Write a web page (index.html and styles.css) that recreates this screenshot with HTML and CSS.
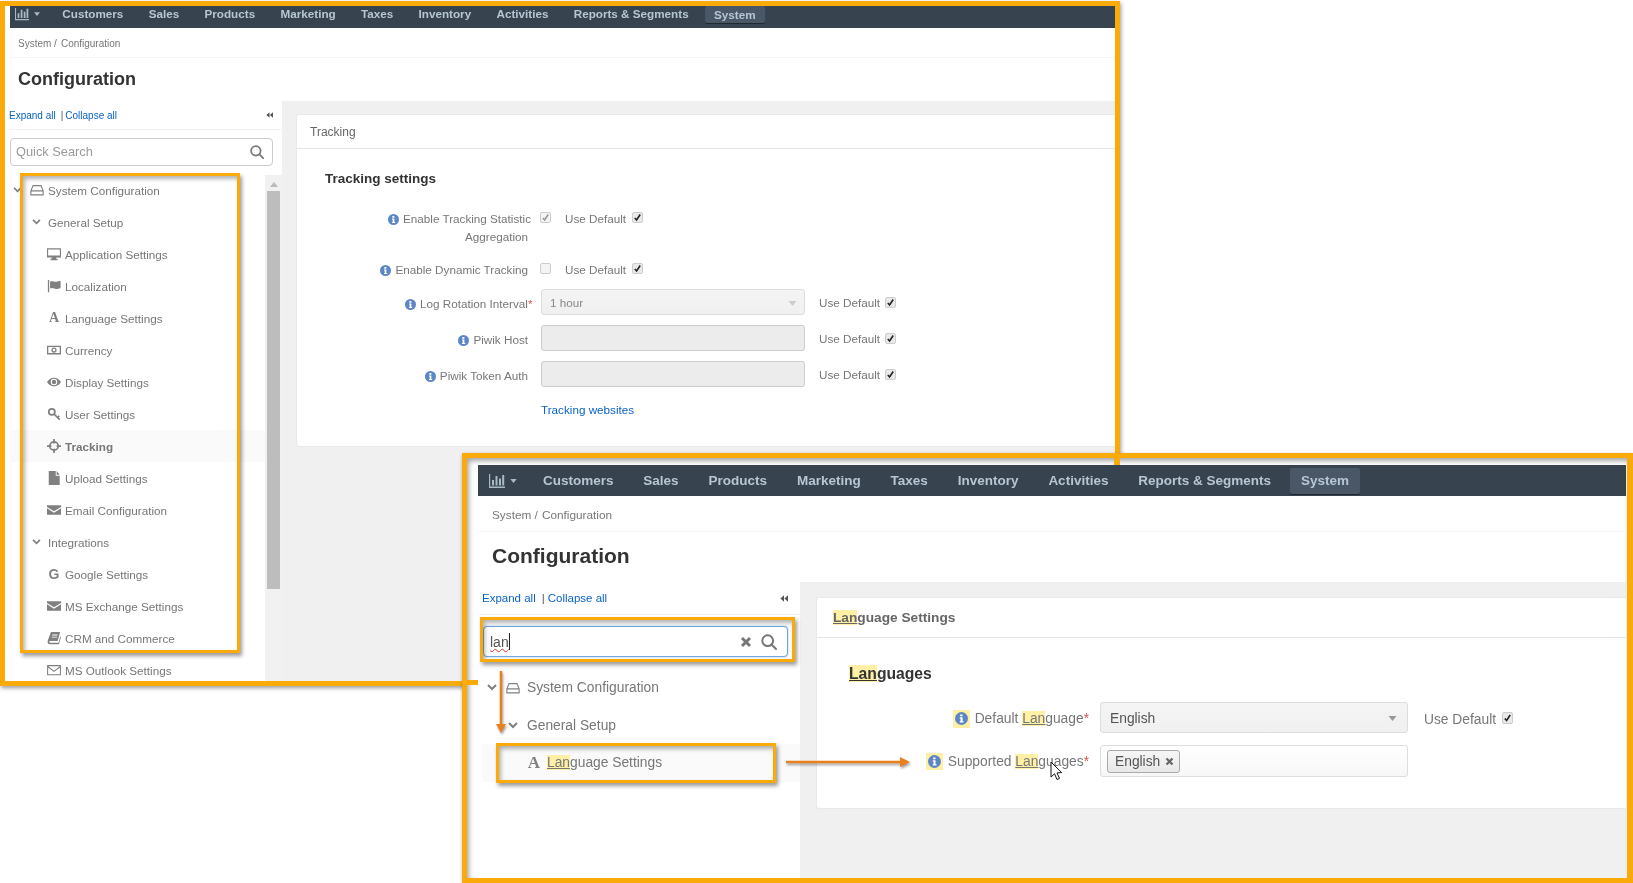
FILE: index.html
```html
<!DOCTYPE html>
<html>
    <head>
        <meta charset="utf-8" />
        <title>Configuration search</title>
        <link rel="stylesheet" href="styles.css">
    </head>
    <body>
        <svg class="defs" width="0" height="0">
            <symbol id="i-chart" viewBox="0 0 16 16"><path d="M0 1h1.2v12.6H16V15H0z M3 7h2v5.5H3z M6.5 3h2v9.5h-2z M10 5.5h2v7h-2z M13.2 2h2v10.500h-2z"/></symbol>
            <symbol id="i-caret" viewBox="0 0 8 5"><path d="M0 0h8L4 5z"/></symbol>
            <symbol id="i-hdd" viewBox="0 0 16 16"><path d="M3.500 3h9l2.500 6v4.500H1V9z M1 9h14" fill="none" stroke="currentColor" stroke-width="1.300"/></symbol>
            <symbol id="i-monitor" viewBox="0 0 16 16"><path fill-rule="evenodd" d="M0 1.500h16v10.500h-5.500v1.500H12V15H4v-1.500h1.500V12H0z M1.300 2.800v7h13.400v-7z"/></symbol>
            <symbol id="i-flag" viewBox="0 0 16 16"><path d="M1 1h1.500v14H1z M3.500 3c3-1.500 5 .8 7.500 0s3.500-.8 4.500-.8v8.300c-1.500 0-3 .9-5 .9s-4-2.200-7-.5z"/></symbol>
            <symbol id="i-money" viewBox="0 0 16 16"><path fill-rule="evenodd" d="M0 3h16v10H0z M1.500 4.500v7h13v-7z M8 5a3 3 0 100 6 3 3 0 000-6z M8 6.500a1.500 1.500 0 110 3 1.500 1.500 0 010-3z"/></symbol>
            <symbol id="i-eye" viewBox="0 0 16 16"><path fill-rule="evenodd" d="M0 8c2-3.500 5-5 8-5s6 1.500 8 5c-2 3.500-5 5-8 5s-6-1.500-8-5z M8 4.300a3.700 3.700 0 100 7.400 3.700 3.700 0 000-7.400z M8 5.500a2.500 2.500 0 110 5 2.500 2.500 0 010-5z"/></symbol>
            <symbol id="i-key" viewBox="0 0 16 16"><g fill="none" stroke="currentColor" stroke-width="2"><circle cx="5.500" cy="5.500" r="3.500"/><path d="M8 8l6.500 6.500 M12 12l2-2"/></g></symbol>
            <symbol id="i-target" viewBox="0 0 16 16"><g fill="none" stroke="currentColor"><circle cx="8" cy="8" r="4.800" stroke-width="2"/><path d="M8 0v5 M8 11v5 M0 8h5 M11 8h5" stroke-width="2"/></g></symbol>
            <symbol id="i-file" viewBox="0 0 16 16"><path d="M2 0h8v5.500h4.500V16H2z M11 0l3.500 4.300H11z"/></symbol>
            <symbol id="i-mail" viewBox="0 0 16 16"><path d="M0 2.500h16v2L8 9.500 0 4.500z M0 6l8 5 8-5v7.500H0z"/></symbol>
            <symbol id="i-mail-o" viewBox="0 0 16 16"><path d="M.7 3h14.600v10.500H.7z M.7 4l7.300 5.500L15.300 4" fill="none" stroke="currentColor" stroke-width="1.200"/></symbol>
            <symbol id="i-book" viewBox="0 0 16 16"><path fill-rule="evenodd" d="M4.500 1H15l-2.800 10.500H3.500c-1 0-1 2 0 2h9.800l2-7.500.7 1-2.300 8H3c-2.500 0-2.500-3-2-4.500z M6 4v1h6V4z M5.500 6.500v1h6v-1z"/></symbol>
            <symbol id="i-chevron" viewBox="0 0 10 7"><path d="M1 1l4 4 4-4" fill="none" stroke="currentColor" stroke-width="2"/></symbol>
            <symbol id="i-search" viewBox="0 0 16 16"><g fill="none" stroke="currentColor" stroke-width="2"><circle cx="6.700" cy="6.700" r="5.400"/><path d="M10.800 10.800l4.200 4.200" stroke-linecap="round"/></g></symbol>
            <symbol id="i-double" viewBox="0 0 10 8"><path d="M5 0v8L.5 4z M10 0v8L5.500 4z"/></symbol>
            <symbol id="i-times" viewBox="0 0 12 12"><path d="M2 2l8 8 M10 2l-8 8" fill="none" stroke="currentColor" stroke-width="3"/></symbol>
            <symbol id="i-check" viewBox="0 0 10 10"><path d="M2 5.500l2 2.200 4-6" fill="none" stroke="currentColor" stroke-width="1.800"/></symbol>
            <symbol id="i-info" viewBox="0 0 16 16"><circle cx="8" cy="8" r="8" fill="#5d86c6"/><path d="M6.300 3h3v2.300h-3z M5.800 6.500h3.500v5h1.200V13H5.800v-1.500h1v-3.500h-1z" fill="#fff"/></symbol>
        </svg>

        <div class="canvas">
            <section class="shot shot-a">
                <nav class="topbar">
                    <div class="brand"><svg class="chart"><use href="#i-chart"/></svg><svg class="caret"><use href="#i-caret"/></svg></div>
                    <a class="nav-item">Customers</a>
                    <a class="nav-item">Sales</a>
                    <a class="nav-item">Products</a>
                    <a class="nav-item">Marketing</a>
                    <a class="nav-item">Taxes</a>
                    <a class="nav-item">Inventory</a>
                    <a class="nav-item">Activities</a>
                    <a class="nav-item">Reports &amp; Segments</a>
                    <a class="nav-item active">System</a>
                </nav>
                <div class="crumbs"><span class="crumb">System /</span>Configuration</div>
                <h1 class="page-title">Configuration</h1>
                <div class="page-body">
                    <aside class="sidebar">
                        <div class="side-top">
                            <span class="links"><a>Expand all</a><i>|</i><a>Collapse all</a></span>
                            <svg class="double"><use href="#i-double"/></svg>
                        </div>
                        <div class="search-wrap">
                            <div class="search">
                                <span class="placeholder">Quick Search</span>
                                <svg class="search-ico"><use href="#i-search"/></svg>
                            </div>
                        </div>
                        <div class="tree-wrap">
                            <ul class="tree">
                                <li class="row l1"><svg class="chev"><use href="#i-chevron"/></svg><svg class="ico"><use href="#i-hdd"/></svg><span class="txt">System Configuration</span></li>
                                <li class="row l2"><svg class="chev"><use href="#i-chevron"/></svg><span class="txt">General Setup</span></li>
                                <li class="row l3"><svg class="ico"><use href="#i-monitor"/></svg><span class="txt">Application Settings</span></li>
                                <li class="row l3"><svg class="ico"><use href="#i-flag"/></svg><span class="txt">Localization</span></li>
                                <li class="row l3"><span class="ico glyph-a">A</span><span class="txt">Language Settings</span></li>
                                <li class="row l3"><svg class="ico"><use href="#i-money"/></svg><span class="txt">Currency</span></li>
                                <li class="row l3"><svg class="ico"><use href="#i-eye"/></svg><span class="txt">Display Settings</span></li>
                                <li class="row l3"><svg class="ico"><use href="#i-key"/></svg><span class="txt">User Settings</span></li>
                                <li class="row l3 current"><svg class="ico"><use href="#i-target"/></svg><span class="txt">Tracking</span></li>
                                <li class="row l3"><svg class="ico"><use href="#i-file"/></svg><span class="txt">Upload Settings</span></li>
                                <li class="row l3"><svg class="ico"><use href="#i-mail"/></svg><span class="txt">Email Configuration</span></li>
                                <li class="row l2"><svg class="chev"><use href="#i-chevron"/></svg><span class="txt">Integrations</span></li>
                                <li class="row l3"><span class="ico glyph-g">G</span><span class="txt">Google Settings</span></li>
                                <li class="row l3"><svg class="ico"><use href="#i-mail"/></svg><span class="txt">MS Exchange Settings</span></li>
                                <li class="row l3"><svg class="ico"><use href="#i-book"/></svg><span class="txt">CRM and Commerce</span></li>
                                <li class="row l3"><svg class="ico"><use href="#i-mail-o"/></svg><span class="txt">MS Outlook Settings</span></li>
                            </ul>
                            <div class="scrollbar">
                                <span class="scroll-up"></span>
                                <span class="scroll-thumb"></span>
                            </div>
                        </div>
                    </aside>
                    <main class="content">
                        <div class="panel">
                            <div class="panel-head">Tracking</div>
                            <div class="panel-body">
                                <h2 class="section">Tracking settings</h2>
                                <div class="frow">
                                    <label class="flabel"><span class="nudge"><svg class="info"><use href="#i-info"/></svg>Enable Tracking Statistic</span><br>Aggregation</label>
                                    <span class="box off"><svg><use href="#i-check"/></svg></span>
                                    <span class="use">Use Default</span>
                                    <span class="box"><svg><use href="#i-check"/></svg></span>
                                </div>
                                <div class="frow second">
                                    <label class="flabel"><svg class="info"><use href="#i-info"/></svg>Enable Dynamic Tracking</label>
                                    <span class="box off"></span>
                                    <span class="use">Use Default</span>
                                    <span class="box"><svg><use href="#i-check"/></svg></span>
                                </div>
                                <div class="frow wide">
                                    <label class="flabel"><svg class="info"><use href="#i-info"/></svg>Log Rotation Interval<b class="star">*</b></label>
                                    <div class="select">1 hour<svg class="caret"><use href="#i-caret"/></svg></div>
                                    <span class="use">Use Default</span>
                                    <span class="box"><svg><use href="#i-check"/></svg></span>
                                </div>
                                <div class="frow wide">
                                    <label class="flabel"><svg class="info"><use href="#i-info"/></svg>Piwik Host</label>
                                    <div class="input"></div>
                                    <span class="use">Use Default</span>
                                    <span class="box"><svg><use href="#i-check"/></svg></span>
                                </div>
                                <div class="frow wide">
                                    <label class="flabel"><svg class="info"><use href="#i-info"/></svg>Piwik Token Auth</label>
                                    <div class="input"></div>
                                    <span class="use">Use Default</span>
                                    <span class="box"><svg><use href="#i-check"/></svg></span>
                                </div>
                                <a class="track-link">Tracking websites</a>
                            </div>
                        </div>
                    </main>
                </div>
            </section>

            <section class="shot shot-b">
                <nav class="topbar">
                    <div class="brand"><svg class="chart"><use href="#i-chart"/></svg><svg class="caret"><use href="#i-caret"/></svg></div>
                    <a class="nav-item">Customers</a>
                    <a class="nav-item">Sales</a>
                    <a class="nav-item">Products</a>
                    <a class="nav-item">Marketing</a>
                    <a class="nav-item">Taxes</a>
                    <a class="nav-item">Inventory</a>
                    <a class="nav-item">Activities</a>
                    <a class="nav-item">Reports &amp; Segments</a>
                    <a class="nav-item active">System</a>
                </nav>
                <div class="crumbs"><span class="crumb">System /</span>Configuration</div>
                <h1 class="page-title">Configuration</h1>
                <div class="page-body">
                    <aside class="sidebar">
                        <div class="side-top">
                            <span class="links"><a>Expand all</a><i>|</i><a>Collapse all</a></span>
                            <svg class="double"><use href="#i-double"/></svg>
                        </div>
                        <div class="search-wrap">
                            <div class="search focus">
                                <span class="typed">lan</span><span class="text-caret"></span>
                                <svg class="clear-ico"><use href="#i-times"/></svg>
                                <svg class="search-ico"><use href="#i-search"/></svg>
                            </div>
                        </div>
                        <ul class="tree">
                            <li class="row l1"><svg class="chev"><use href="#i-chevron"/></svg><svg class="ico"><use href="#i-hdd"/></svg><span class="txt">System Configuration</span></li>
                            <li class="row l2"><svg class="chev"><use href="#i-chevron"/></svg><span class="txt">General Setup</span></li>
                            <li class="row l3 current"><span class="ico glyph-a">A</span><span class="txt"><mark>Lan</mark>guage Settings</span></li>
                        </ul>
                    </aside>
                    <main class="content">
                        <div class="panel">
                            <div class="panel-head"><mark>Lan</mark>guage Settings</div>
                            <div class="panel-body">
                                <h2 class="section"><mark>Lan</mark>guages</h2>
                                <div class="frow wide first">
                                    <label class="flabel"><mark class="info-mark"><svg class="info"><use href="#i-info"/></svg></mark>Default <mark>Lan</mark>guage<b class="star">*</b></label>
                                    <div class="select">English<svg class="caret"><use href="#i-caret"/></svg></div>
                                    <span class="use">Use Default</span>
                                    <span class="box"><svg><use href="#i-check"/></svg></span>
                                </div>
                                <div class="frow wide">
                                    <label class="flabel"><mark class="info-mark"><svg class="info"><use href="#i-info"/></svg></mark>Supported <mark>Lan</mark>guages<b class="star">*</b></label>
                                    <div class="multi"><span class="tag">English<svg><use href="#i-times"/></svg></span></div>
                                </div>
                            </div>
                        </div>
                    </main>
                </div>
            </section>

            <!-- callouts drawn over the two screenshots -->
            <div class="stub stub-h"></div>
            <div class="stub stub-v"></div>
            <div class="mark mark-tree"></div>
            <div class="mark mark-search"></div>
            <div class="mark mark-row"></div>
            <svg class="arrow arrow-down" width="16" height="66"><path d="M8 1v56" stroke="#e8801f" stroke-width="2.500"/><path d="M3 54h10l-5 9z" fill="#e8801f"/></svg>
            <svg class="arrow arrow-right" width="128" height="14"><path d="M1 7h116" stroke="#e8801f" stroke-width="2.500"/><path d="M115 2l10 5-10 5z" fill="#e8801f"/></svg>
            <svg class="pointer" width="14" height="20" viewBox="0 0 14 20"><path d="M1 1v15l3.500-3.200 2.500 5.700 2.500-1.100-2.500-5.500 4.700-.3z" fill="#fff" stroke="#111" stroke-width="1"/></svg>
        </div>
    </body>
</html>
```
FILE: styles.css
```css
html, body {
    margin: 0;
    padding: 0;
    background: #fff;
}
ul, h1, h2 {
    margin: 0;
    padding: 0;
}
ul {
    list-style: none;
}
.defs {
    position: absolute;
}
.canvas {
    position: relative;
    width: 1633px;
    height: 883px;
    overflow: hidden;
    font-family: "Liberation Sans", Arial, sans-serif;
    color: #777;
}

/* the two pasted screenshots */
.shot {
    position: absolute;
    box-sizing: border-box;
    display: flex;
    flex-direction: column;
    overflow: hidden;
    background: #fff;
    border: 5px solid #faab0a;
    filter: drop-shadow(1px 2px 2px rgba(0, 0, 0, .4));
}
.shot-a {
    left: 0;
    top: 1px;
    width: 1120px;
    height: 685px;
    padding-left: 5px;
}
.shot-b {
    left: 462px;
    top: 453px;
    width: 1171px;
    height: 430px;
    padding: 7px 1px 0 11px;
    border-right-width: 6px;
    box-shadow: inset 2px 3px 5px rgba(0, 0, 0, .35);
}

.topbar {
    display: flex;
    align-items: center;
    flex: none;
    box-sizing: border-box;
    background: #37434f;
    color: #b6c6d2;
    font-weight: bold;
}
.brand {
    display: flex;
    align-items: center;
    flex: none;
    color: #a9bac6;
}
.brand svg, .select svg {
    fill: currentColor;
}
.nav-item {
    border-radius: 2px;
}
.nav-item.active {
    background: #4a5766;
    box-shadow: 0 1px 0 #20272e;
}
.crumbs {
    flex: none;
    display: flex;
    align-items: center;
    box-sizing: border-box;
    border-bottom: 1px solid #f5f5f5;
    color: #777;
}
.page-title {
    flex: none;
    color: #333;
    font-weight: bold;
}
.page-body {
    flex: 1;
    display: flex;
    min-height: 0;
    background: #f0f0f0;
}
.sidebar {
    flex: none;
    display: flex;
    flex-direction: column;
    min-height: 0;
    background: #fff;
}
.side-top {
    flex: none;
    display: flex;
    align-items: center;
    justify-content: space-between;
    box-sizing: border-box;
    border-bottom: 1px solid #f0f0f0;
}
.links {
    color: #0a62c4;
}
.links i {
    font-style: normal;
    color: #555;
}
.double {
    fill: #555;
}
.search-wrap {
    flex: none;
    box-sizing: border-box;
}
.search {
    display: flex;
    align-items: center;
    box-sizing: border-box;
    border: 1px solid #ccc;
    border-radius: 4px;
    background: #fff;
}
.placeholder {
    flex: 1;
    color: #999;
}
.search-ico, .clear-ico {
    flex: none;
    color: #777;
}
.tree-wrap {
    flex: 1;
    display: flex;
    min-height: 0;
}
.tree {
    overflow: hidden;
}
.row {
    display: flex;
    align-items: center;
    white-space: nowrap;
    color: #777;
}
.row.current {
    background: #fafafa;
}
.chev, .ico {
    flex: none;
    color: #808080;
    fill: currentColor;
}
.glyph-a {
    font-family: "Liberation Serif", serif;
    font-weight: bold;
    text-align: center;
}
.glyph-g {
    font-weight: bold;
    text-align: center;
}
mark {
    background: #fff0a6;
    color: inherit;
    text-decoration: underline;
}
.info-mark {
    display: inline-block;
    text-decoration: none;
    line-height: 1;
}

.panel {
    box-sizing: border-box;
    background: #fff;
    border-radius: 3px 0 0 3px;
    border: 1px solid #e9e9e9;
    border-right: 0;
}
.panel-head {
    display: flex;
    align-items: center;
    box-sizing: border-box;
    border-bottom: 1px solid #e5e5e5;
    color: #666;
}
.section {
    color: #333;
    font-weight: bold;
}
.frow {
    display: flex;
    align-items: flex-start;
}
.frow.wide {
    align-items: center;
}
.flabel {
    flex: none;
    text-align: right;
    color: #777;
}
.info {
    vertical-align: -2px;
}
.star {
    color: #d9534f;
    font-weight: normal;
}
.box {
    flex: none;
    display: flex;
    align-items: center;
    justify-content: center;
    box-sizing: border-box;
    border: 1px solid #ccc;
    border-radius: 2px;
    background: #e9e9e9;
    color: #222;
}
.box.off {
    background: #f4f4f4;
    color: #999;
}
.box svg {
    width: 100%;
    height: 100%;
}
.use {
    flex: none;
    color: #777;
}
.select, .input, .multi {
    flex: none;
    box-sizing: border-box;
    display: flex;
    align-items: center;
    border: 1px solid #ddd;
    border-radius: 3px;
}
.select {
    justify-content: space-between;
    background: linear-gradient(#f4f4f4, #f0f0f0);
    color: #888;
}
.input {
    background: #ececec;
    border-color: #ccc;
}
.multi {
    background: linear-gradient(#fff, #f7f7f7);
}
.tag {
    display: flex;
    align-items: center;
    box-sizing: border-box;
    border: 1px solid #aaa;
    border-radius: 3px;
    background: linear-gradient(#f6f6f6, #e8e8e8);
    color: #555;
}

/* sizes of the small screenshot */
.shot-a .topbar {
    height: 22px;
    padding: 0 0 7px 5px;
    gap: 7.300px;
    font-size: 11.700px;
}
.shot-a .brand {
    width: 31px;
}
.shot-a .chart {
    width: 14px;
    height: 14px;
}
.shot-a .brand .caret {
    width: 6px;
    height: 4px;
    margin-left: 5px;
}
.shot-a .nav-item {
    padding: 1px 9px;
}
.shot-a .nav-item.active {
    padding: 2px 9px;
    margin-top: 1px;
}
.shot-a .crumbs {
    height: 30px;
    padding: 2px 0 0 8px;
    font-size: 10px;
}
.shot-a .crumb {
    margin-right: 4px;
}
.shot-a .page-title {
    height: 43px;
    line-height: 42px;
    padding-left: 8px;
    font-size: 18px;
}
.shot-a .sidebar {
    width: 272px;
}
.shot-a .side-top {
    height: 29px;
    padding-right: 9px;
    font-size: 10px;
}
.shot-a .links {
    margin-left: -1px;
}
.shot-a .links i {
    margin: 0 2px 0 5px;
}
.shot-a .double {
    width: 7px;
    height: 6px;
}
.shot-a .search-wrap {
    height: 45px;
    padding-top: 8px;
}
.shot-a .search {
    width: 263px;
    height: 28px;
    padding: 0 8px 2px 5px;
    font-size: 12.800px;
}
.shot-a .search-ico {
    width: 14px;
    height: 14px;
    margin-top: 2px;
}
.shot-a .tree {
    width: 255px;
    margin-top: -1px;
    font-size: 11.700px;
}
.shot-a .row {
    height: 32px;
}
.shot-a .chev {
    width: 9px;
    height: 6px;
}
.shot-a .ico {
    width: 14px;
    height: 14px;
    line-height: 14px;
}
.shot-a .glyph-a, .shot-a .glyph-g {
    font-size: 14px;
}
.shot-a .l1 {
    padding-left: 3px;
}
.shot-a .l1 .ico {
    margin-left: 8px;
}
.shot-a .l1 .txt {
    margin-left: 4px;
}
.shot-a .l2 {
    padding-left: 22px;
}
.shot-a .l2 .txt {
    margin-left: 7px;
}
.shot-a .l3 {
    padding-left: 37px;
}
.shot-a .l3 .txt {
    margin-left: 4px;
}
.shot-a .current .txt {
    font-weight: bold;
}
.scrollbar {
    width: 17px;
    flex: none;
    display: flex;
    flex-direction: column;
    align-items: center;
    background: #f1f1f1;
}
.scroll-up {
    margin: 7px 0 4px;
    border: 4px solid transparent;
    border-top: 0;
    border-bottom: 5px solid #bbb;
}
.scroll-thumb {
    width: 13px;
    height: 398px;
    background: #bdbdbd;
}
.shot-a .content {
    flex: 1;
    padding: 13px 0 0 14px;
}
.shot-a .panel {
    height: 333px;
}
.shot-a .panel-head {
    height: 34px;
    padding-left: 13px;
    font-size: 12px;
}
.shot-a .panel-body {
    padding-top: 21px;
    font-size: 11.700px;
    line-height: 18px;
}
.shot-a .section {
    margin: 0 0 22px 28px;
    font-size: 13.500px;
    line-height: 18px;
}
.shot-a .flabel {
    width: 231px;
}
.shot-a .wide .flabel {
    padding-top: 3px;
}
.shot-a .nudge {
    margin-right: -2px;
    position: relative;
    left: 1px;
}
.shot-a .info {
    width: 11px;
    height: 11px;
    margin-right: 4px;
}
.shot-a .star {
    margin-right: -4.500px;
}
.shot-a .box {
    width: 11px;
    height: 11px;
    margin-top: 2px;
}
.shot-a .frow > .box:nth-of-type(1) {
    margin-left: 12px;
}
.shot-a .use {
    margin-left: 14px;
    width: 67px;
}
.shot-a .second {
    margin-top: 15px;
}
.shot-a .wide {
    margin-top: 10px;
}
.shot-a .wide .use {
    padding-top: 1px;
}
.shot-a .wide .box {
    margin: 0 0 0 -1px;
}
.shot-a .select, .shot-a .input {
    width: 264px;
    height: 26px;
    margin-left: 13px;
    padding: 2px 7px 0 8px;
}
.shot-a .select .caret {
    width: 9px;
    height: 5px;
    color: #ccc;
}
.track-link {
    display: block;
    margin: 14px 0 0 244px;
    color: #0a62c4;
}

/* sizes of the large screenshot */
.shot-b .topbar {
    height: 31px;
    gap: 7.900px;
    font-size: 13.500px;
}
.shot-b .brand {
    width: 46px;
    padding-left: 11px;
    box-sizing: border-box;
}
.shot-b .chart {
    width: 16px;
    height: 16px;
}
.shot-b .brand .caret {
    width: 7px;
    height: 4px;
    margin-left: 5px;
}
.shot-b .nav-item {
    padding: 5px 11px 6px;
}
.shot-b .crumbs {
    height: 36px;
    padding: 2px 0 0 14px;
    font-size: 11.800px;
}
.shot-b .crumb {
    margin-right: 4px;
}
.shot-b .page-title {
    height: 50px;
    line-height: 47px;
    padding-left: 14px;
    font-size: 21px;
}
.shot-b .sidebar {
    width: 322px;
}
.shot-b .side-top {
    height: 33px;
    padding: 0 12px 0 4px;
    font-size: 11.500px;
}
.shot-b .links i {
    margin: 0 3px 0 6px;
}
.shot-b .double {
    width: 8px;
    height: 7px;
}
.shot-b .search-wrap {
    height: 53px;
    padding: 11px 0 0 5px;
}
.shot-b .search {
    width: 305px;
    height: 31px;
    padding: 0 10px 0 6px;
    border-color: #6fa8dc;
    box-shadow: 0 0 2px #8ab8e6;
    font-size: 14px;
}
.typed {
    color: #555;
    text-decoration: underline wavy #d33 1px;
}
.text-caret {
    flex: 1;
    height: 17px;
    border-left: 1px solid #222;
}
.clear-ico {
    width: 12px;
    height: 12px;
    margin-right: 9px;
}
.shot-b .search-ico {
    width: 16px;
    height: 16px;
}
.shot-b .tree {
    margin: 1px 0 0 4px;
    font-size: 13.800px;
}
.shot-b .row {
    height: 37.500px;
}
.shot-b .chev {
    width: 10px;
    height: 7px;
}
.shot-b .ico {
    width: 14px;
    height: 16px;
    line-height: 16px;
}
.shot-b .glyph-a {
    font-size: 17px;
}
.shot-b .l1 {
    padding-left: 5px;
}
.shot-b .l1 .ico {
    margin-left: 9px;
}
.shot-b .l1 .txt {
    margin-left: 7px;
}
.shot-b .l2 {
    padding-left: 26px;
}
.shot-b .l2 .txt {
    margin-left: 9px;
}
.shot-b .l3 {
    padding-left: 45px;
}
.shot-b .l3 .txt {
    margin-left: 6px;
}
.shot-b .content {
    flex: 1;
    padding: 15px 0 0 16px;
}
.shot-b .panel {
    height: 212px;
}
.shot-b .panel-head {
    height: 40px;
    padding-left: 16px;
    font-size: 13.700px;
    font-weight: bold;
}
.shot-b .panel-body {
    padding-top: 25px;
    font-size: 13.800px;
}
.shot-b .section {
    height: 22px;
    margin: 0 0 17px 32px;
    font-size: 15.700px;
    line-height: 22px;
}
.shot-b .frow + .frow {
    margin-top: 12px;
}
.shot-b .flabel {
    width: 265px;
    padding-top: 1px;
}
.shot-b .first .flabel {
    padding-top: 3px;
}
.shot-b .info-mark {
    padding: 2px 2px;
    margin-right: 5px;
}
.shot-b .info {
    width: 13px;
    height: 13px;
}
.shot-b .star {
    margin-right: -7px;
}
.shot-b .select, .shot-b .multi {
    width: 308px;
    margin-left: 18px;
}
.shot-b .select {
    height: 31px;
    padding: 2px 10px 0 9px;
    color: #555;
}
.shot-b .select .caret {
    width: 9px;
    height: 5px;
    color: #999;
}
.shot-b .multi {
    height: 32px;
    padding-left: 6px;
}
.shot-b .use {
    margin-left: 16px;
    width: 78px;
    padding-top: 3px;
}
.shot-b .box {
    width: 11px;
    height: 12px;
}
.tag {
    height: 23px;
    padding: 0 5px 0 7px;
    gap: 5px;
}
.tag svg {
    width: 9px;
    height: 9px;
    color: #666;
}

/* callouts */
.stub {
    position: absolute;
    background: #faab0a;
}
.stub-h {
    left: 462px;
    top: 680px;
    width: 16px;
    height: 5px;
}
.stub-v {
    left: 1114px;
    top: 453px;
    width: 6px;
    height: 12px;
}
.mark {
    position: absolute;
    box-sizing: border-box;
    border: 3.500px solid #faab0a;
    box-shadow: 2px 3px 4px rgba(0, 0, 0, .4), inset 2px 3px 4px rgba(0, 0, 0, .3);
}
.mark-tree {
    left: 20px;
    top: 173px;
    width: 220px;
    height: 480px;
}
.mark-search {
    left: 480px;
    top: 617px;
    width: 315px;
    height: 45px;
}
.mark-row {
    left: 496px;
    top: 743px;
    width: 280px;
    height: 40px;
}
.arrow {
    position: absolute;
    filter: drop-shadow(1px 2px 1px rgba(0, 0, 0, .35));
}
.arrow-down {
    left: 493px;
    top: 670px;
}
.arrow-right {
    left: 785px;
    top: 755px;
}
.pointer {
    position: absolute;
    left: 1050px;
    top: 761px;
}
```
